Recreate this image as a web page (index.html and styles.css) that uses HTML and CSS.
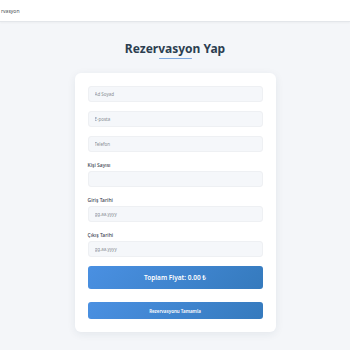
FILE: index.html
```html
<!DOCTYPE html>
<html lang="tr">
<head>
<meta charset="utf-8">
<title>Rezervasyon Yap</title>
<link rel="stylesheet" href="styles.css">
</head>
<body>
<header class="topbar">
  <span class="brand">rvasyon</span>
</header>
<main class="page">
  <h1 class="title">Rezervasyon Yap</h1>
  <form class="card">
    <div class="group"><input class="field" type="text" placeholder="Ad Soyad"></div>
    <div class="group"><input class="field" type="email" placeholder="E-posta"></div>
    <div class="group"><input class="field" type="tel" placeholder="Telefon"></div>
    <div class="group">
      <label class="label">Kişi Sayısı</label>
      <input class="field" type="text">
    </div>
    <div class="group">
      <label class="label">Giriş Tarihi</label>
      <input class="field" type="text" placeholder="gg.aa.yyyy">
    </div>
    <div class="group">
      <label class="label">Çıkış Tarihi</label>
      <input class="field" type="text" placeholder="gg.aa.yyyy">
    </div>
    <div class="price">Toplam Fiyat: 0.00 ₺</div>
    <button class="submit" type="button">Rezervasyonu Tamamla</button>
  </form>
</main>
</body>
</html>
```
FILE: styles.css
```css
* { box-sizing: border-box; }
html, body { margin: 0; padding: 0; }
body {
  background: #f4f6f9;
  font-family: "Noto Sans", "Open Sans", sans-serif;
  color: #2c3e50;
  height: 350px;
  overflow: hidden;
}
.topbar {
  height: 22px;
  background: #ffffff;
  border-bottom: 1px solid #e3e6ea;
  box-shadow: 0 1px 2px rgba(0,0,0,0.04);
  display: flex;
  align-items: center;
  padding-left: 1px;
}
.brand {
  font-size: 5px;
  color: #4a4f55;
  white-space: nowrap;
}
.page {
  display: flex;
  flex-direction: column;
  align-items: center;
}
.title {
  margin: 19px 0 16px;
  font-size: 12px;
  font-weight: 700;
  line-height: 16px;
  color: #2c3e50;
  position: relative;
}
.title::after {
  content: "";
  position: absolute;
  left: 50%;
  bottom: -2px;
  width: 33px;
  height: 1.5px;
  margin-left: -16px;
  background: #7fa9e0;
  border-radius: 1px;
}
.card {
  width: 201px;
  background: #ffffff;
  border-radius: 6px;
  padding: 13px;
  box-shadow: 0 2px 8px rgba(30,50,80,0.08);
  display: flex;
  flex-direction: column;
}
.group {
  margin-bottom: 9px;
  display: flex;
  flex-direction: column;
}
.label {
  font-size: 5px;
  line-height: 8px;
  height: 8px;
  margin-bottom: 2px;
  font-weight: 500;
  color: #3a4250;
}
.field {
  height: 16px;
  width: 100%;
  border: 1px solid #eef0f3;
  background: #f5f7fa;
  border-radius: 3px;
  padding: 0 6px;
  font-family: inherit;
  font-size: 4.5px;
  color: #444;
  outline: none;
}
.field::placeholder { color: #8a8f96; }
.price {
  height: 23px;
  border-radius: 3px;
  background: linear-gradient(135deg, #4a90e2, #357abd);
  color: #ffffff;
  font-size: 6.5px;
  font-weight: 600;
  display: flex;
  align-items: center;
  justify-content: center;
  margin-bottom: 13px;
}
.submit {
  height: 17px;
  border: none;
  border-radius: 3px;
  background: linear-gradient(135deg, #4a90e2, #357abd);
  color: #ffffff;
  font-family: inherit;
  font-size: 4.5px;
  font-weight: 600;
  padding: 0;
}
```
